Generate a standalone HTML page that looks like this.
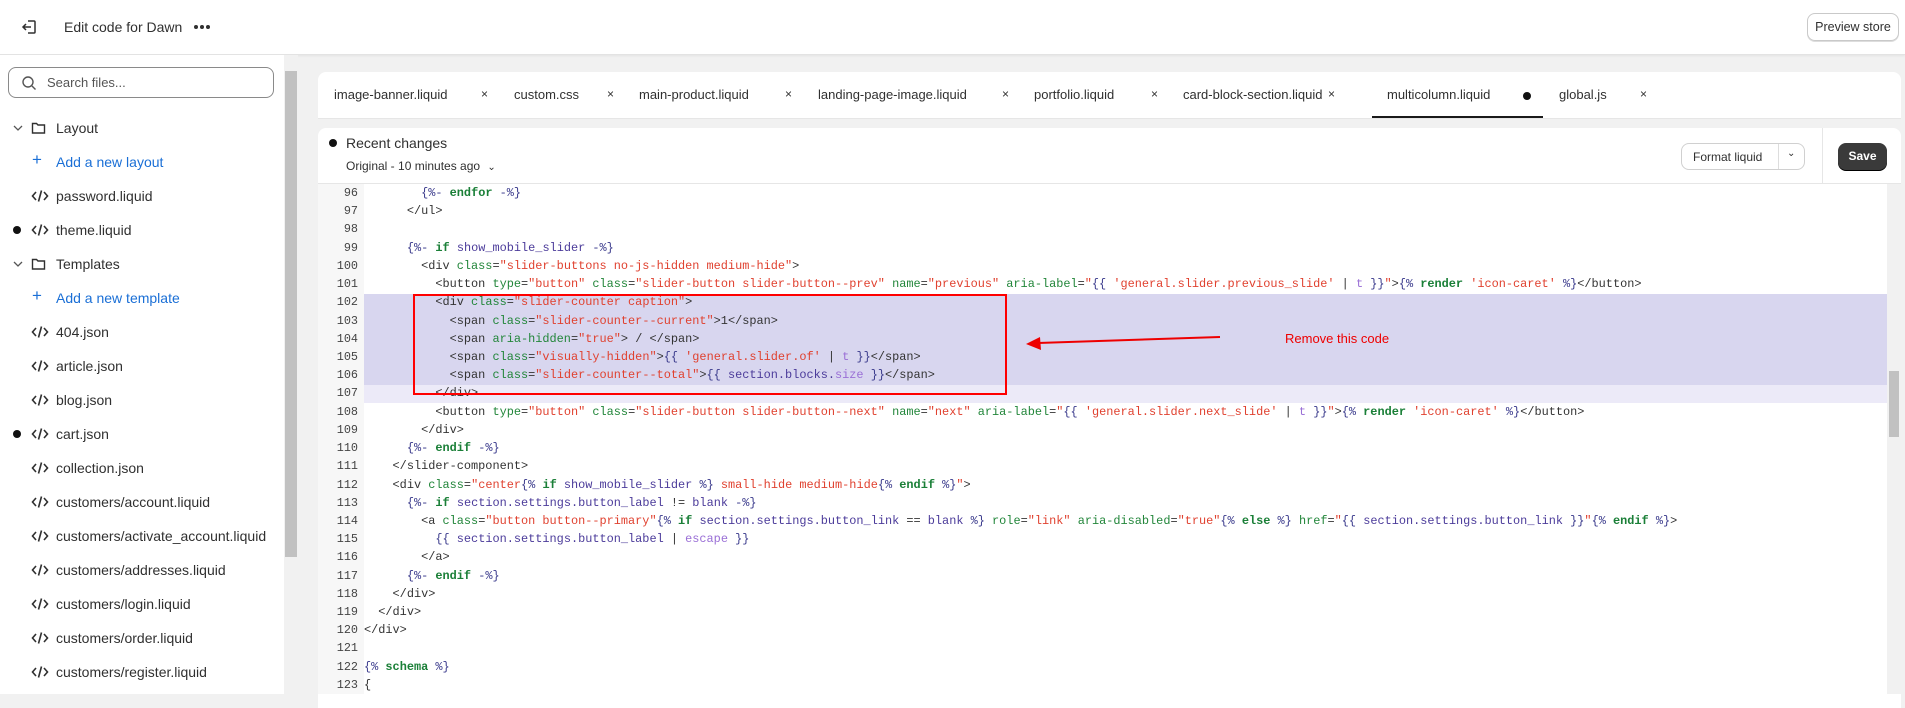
<!DOCTYPE html>
<html><head><meta charset="utf-8"><style>
*{box-sizing:border-box;margin:0;padding:0}
body{width:1905px;height:694px;overflow:hidden;background:#f1f1f1;font-family:"Liberation Sans",sans-serif;color:#303030;position:relative}
.hdr{position:absolute;left:0;top:0;width:1905px;height:55px;background:#fff;border-bottom:1px solid #e3e3e3;box-shadow:0 1px 2px rgba(0,0,0,.06)}
.abs{position:absolute}
.side{position:absolute;left:0;top:55px;width:284px;height:639px;background:#fff}
.sb{position:absolute;left:284px;top:55px;width:14px;height:639px;background:#f1f1f1}
.sb i{position:absolute;left:1px;top:16px;width:12px;height:486px;background:#c1c1c1}
.item{position:absolute;left:56px;font-size:14px;color:#303030;line-height:18px}
.blue{color:#1a6fd6}
.ci{position:absolute;left:31px}
.dot{position:absolute;left:13px;width:8px;height:8px;border-radius:50%;background:#111}
.card{position:absolute;background:#fff;border-radius:8px}
.tab{position:absolute;top:87px;font-size:13px;color:#303030}
.x{position:absolute;top:87px;font-size:12px;color:#303030}
.code{position:absolute;left:364px;top:184px;font-family:"Liberation Mono",monospace;font-size:11.9px;color:#333}
.ln{position:absolute;left:318px;width:40px;text-align:right;font-family:"Liberation Mono",monospace;font-size:11.8px;color:#444}
.l{height:18.23px;line-height:18.23px;white-space:pre}
.t{color:#333}.a{color:#22863a}.s{color:#e0412f}.d{color:#3a3a8c}.k{color:#1a7f37;font-weight:bold}.v{color:#4b3b9a}.f{color:#9a6fd6}
</style></head><body>
<svg width="0" height="0" style="position:absolute"><defs><symbol id="cd" viewBox="0 0 18 14"><path d="M5 3L1.5 7 5 11M13 3l3.5 4L13 11M10.5 1.5L7.5 12.5" fill="none" stroke="#303030" stroke-width="1.6"/></symbol></defs></svg>
<div class="hdr">
<svg class="abs" style="left:20px;top:18px" width="18" height="18" viewBox="0 0 18 18" fill="none" stroke="#303030" stroke-width="1.5"><path d="M8 3h6a1 1 0 0 1 1 1v10a1 1 0 0 1-1 1H8"/><path d="M11 9H3M6 6L3 9l3 3"/></svg>
<div class="abs" style="left:64px;top:19px;font-size:14px">Edit code for Dawn</div>
<div class="abs" style="left:194px;top:25px;width:4px;height:4px;border-radius:50%;background:#303030"></div>
<div class="abs" style="left:200px;top:25px;width:4px;height:4px;border-radius:50%;background:#303030"></div>
<div class="abs" style="left:206px;top:25px;width:4px;height:4px;border-radius:50%;background:#303030"></div>
<div class="abs" style="left:1807px;top:13px;width:92px;height:28px;border:1px solid #c9c9c9;border-radius:8px;font-size:12.5px;text-align:center;line-height:26px;box-shadow:0 1px 0 #ddd">Preview store</div>
</div>
<div class="side">
<div class="abs" style="left:8px;top:12px;width:266px;height:31px;border:1px solid #8a8a8a;border-radius:8px"></div>
<svg class="abs" style="left:21px;top:20px" width="16" height="16" viewBox="0 0 16 16" fill="none" stroke="#555" stroke-width="1.4"><circle cx="7" cy="7" r="5"/><path d="M11 11l3.5 3.5"/></svg>
<div class="abs" style="left:47px;top:20px;font-size:13px;color:#555">Search files...</div>
</div>
<div class="sb"><i></i></div>
<svg class="abs" style="left:12px;top:123px" width="12" height="10" viewBox="0 0 12 10" fill="none" stroke="#555" stroke-width="1.3"><path d="M2 3l4 4 4-4"/></svg>
<svg class="abs" style="left:31px;top:121px" width="15" height="14" viewBox="0 0 15 14" fill="none" stroke="#303030" stroke-width="1.4"><path d="M1.5 2.5h4l1.5 1.5h6.5v8h-12z"/></svg>
<div class="item" style="top:119px">Layout</div>
<div class="abs blue" style="left:32px;top:150px;font-size:17px">+</div>
<div class="item blue" style="top:153px">Add a new layout</div>
<svg class="ci" style="top:189px" width="18" height="14"><use href="#cd"/></svg><div class="item" style="top:187px">password.liquid</div>
<div class="dot" style="top:226px"></div><svg class="ci" style="top:223px" width="18" height="14"><use href="#cd"/></svg><div class="item" style="top:221px">theme.liquid</div>
<svg class="abs" style="left:12px;top:259px" width="12" height="10" viewBox="0 0 12 10" fill="none" stroke="#555" stroke-width="1.3"><path d="M2 3l4 4 4-4"/></svg>
<svg class="abs" style="left:31px;top:257px" width="15" height="14" viewBox="0 0 15 14" fill="none" stroke="#303030" stroke-width="1.4"><path d="M1.5 2.5h4l1.5 1.5h6.5v8h-12z"/></svg>
<div class="item" style="top:255px">Templates</div>
<div class="abs blue" style="left:32px;top:286px;font-size:17px">+</div>
<div class="item blue" style="top:289px">Add a new template</div>
<svg class="ci" style="top:325px" width="18" height="14"><use href="#cd"/></svg><div class="item" style="top:323px">404.json</div>
<svg class="ci" style="top:359px" width="18" height="14"><use href="#cd"/></svg><div class="item" style="top:357px">article.json</div>
<svg class="ci" style="top:393px" width="18" height="14"><use href="#cd"/></svg><div class="item" style="top:391px">blog.json</div>
<div class="dot" style="top:430px"></div><svg class="ci" style="top:427px" width="18" height="14"><use href="#cd"/></svg><div class="item" style="top:425px">cart.json</div>
<svg class="ci" style="top:461px" width="18" height="14"><use href="#cd"/></svg><div class="item" style="top:459px">collection.json</div>
<svg class="ci" style="top:495px" width="18" height="14"><use href="#cd"/></svg><div class="item" style="top:493px">customers/account.liquid</div>
<svg class="ci" style="top:529px" width="18" height="14"><use href="#cd"/></svg><div class="item" style="top:527px">customers/activate_account.liquid</div>
<svg class="ci" style="top:563px" width="18" height="14"><use href="#cd"/></svg><div class="item" style="top:561px">customers/addresses.liquid</div>
<svg class="ci" style="top:597px" width="18" height="14"><use href="#cd"/></svg><div class="item" style="top:595px">customers/login.liquid</div>
<svg class="ci" style="top:631px" width="18" height="14"><use href="#cd"/></svg><div class="item" style="top:629px">customers/order.liquid</div>
<svg class="ci" style="top:665px" width="18" height="14"><use href="#cd"/></svg><div class="item" style="top:663px">customers/register.liquid</div>

<div class="card" style="left:318px;top:72px;width:1583px;height:47px;border-radius:8px 8px 0 0;border-bottom:1px solid #e6e6e6"></div>
<div class="tab" style="left:334px">image-banner.liquid</div><div class="x" style="left:481px">×</div>
<div class="tab" style="left:514px">custom.css</div><div class="x" style="left:607px">×</div>
<div class="tab" style="left:639px">main-product.liquid</div><div class="x" style="left:785px">×</div>
<div class="tab" style="left:818px">landing-page-image.liquid</div><div class="x" style="left:1002px">×</div>
<div class="tab" style="left:1034px">portfolio.liquid</div><div class="x" style="left:1151px">×</div>
<div class="tab" style="left:1183px">card-block-section.liquid</div><div class="x" style="left:1328px">×</div>
<div class="tab" style="left:1387px">multicolumn.liquid</div><div class="abs" style="left:1523px;top:92px;width:8px;height:8px;border-radius:50%;background:#111"></div>
<div class="tab" style="left:1559px">global.js</div><div class="x" style="left:1640px">×</div>
<div class="abs" style="left:1372px;top:116px;width:171px;height:2px;background:#1a1a1a"></div>

<div class="card" style="left:318px;top:128px;width:1583px;height:580px;border-radius:8px 8px 0 0"></div>
<div class="abs" style="left:329px;top:139px;width:8px;height:8px;border-radius:50%;background:#111"></div>
<div class="abs" style="left:346px;top:135px;font-size:14px">Recent changes</div>
<div class="abs" style="left:346px;top:159px;font-size:12px">Original - 10 minutes ago <span style="font-size:10px;margin-left:4px">&#8964;</span></div>
<div class="abs" style="left:318px;top:183px;width:1583px;height:1px;background:#e6e6e6"></div>
<div class="abs" style="left:1822px;top:128px;width:1px;height:55px;background:#e6e6e6"></div>
<div class="abs" style="left:1681px;top:143px;width:124px;height:27px;border:1px solid #d0d0d0;border-radius:8px"></div>
<div class="abs" style="left:1693px;top:150px;font-size:12px">Format liquid</div>
<div class="abs" style="left:1778px;top:144px;width:1px;height:25px;background:#ddd"></div>
<div class="abs" style="left:1787px;top:148px;font-size:10px">&#8964;</div>
<div class="abs" style="left:1838px;top:143px;width:49px;height:27px;border-radius:8px;background:#3a3a3a;color:#fff;font-size:12px;font-weight:bold;text-align:center;line-height:27px;box-shadow:0 1px 0 #000">Save</div>
<div class="abs" style="left:318px;top:184px;width:46px;height:510px;background:#f7f7f7"></div>
<div class="abs" style="left:364px;top:294px;width:1523px;height:91px;background:#d8d6ef"></div>
<div class="abs" style="left:364px;top:385px;width:1523px;height:18px;background:#eceaf8"></div>
<div class="abs" style="left:1887px;top:184px;width:14px;height:510px;background:#f1f1f1"></div>
<div class="abs" style="left:1889px;top:371px;width:10px;height:66px;background:#c1c1c1"></div>

<div class="ln" style="top:184px"><div class="l">96</div><div class="l">97</div><div class="l">98</div><div class="l">99</div><div class="l">100</div><div class="l">101</div><div class="l">102</div><div class="l">103</div><div class="l">104</div><div class="l">105</div><div class="l">106</div><div class="l">107</div><div class="l">108</div><div class="l">109</div><div class="l">110</div><div class="l">111</div><div class="l">112</div><div class="l">113</div><div class="l">114</div><div class="l">115</div><div class="l">116</div><div class="l">117</div><div class="l">118</div><div class="l">119</div><div class="l">120</div><div class="l">121</div><div class="l">122</div><div class="l">123</div></div>

<div class="code">
<div class="l">        <span class="d">{%-</span> <span class="k">endfor</span> <span class="d">-%}</span></div>
<div class="l">      &lt;/ul&gt;</div>
<div class="l"> </div>
<div class="l">      <span class="d">{%-</span> <span class="k">if</span> <span class="v">show_mobile_slider</span> <span class="d">-%}</span></div>
<div class="l">        &lt;div <span class="a">class</span>=<span class="s">"slider-buttons no-js-hidden medium-hide"</span>&gt;</div>
<div class="l">          &lt;button <span class="a">type</span>=<span class="s">"button"</span> <span class="a">class</span>=<span class="s">"slider-button slider-button--prev"</span> <span class="a">name</span>=<span class="s">"previous"</span> <span class="a">aria-label</span>=<span class="s">"</span><span class="d">{{</span> <span class="s">'general.slider.previous_slide'</span> | <span class="f">t</span> <span class="d">}}</span><span class="s">"</span>&gt;<span class="d">{%</span> <span class="k">render</span> <span class="s">'icon-caret'</span> <span class="d">%}</span>&lt;/button&gt;</div>
<div class="l">          &lt;div <span class="a">class</span>=<span class="s">"slider-counter caption"</span>&gt;</div>
<div class="l">            &lt;span <span class="a">class</span>=<span class="s">"slider-counter--current"</span>&gt;1&lt;/span&gt;</div>
<div class="l">            &lt;span <span class="a">aria-hidden</span>=<span class="s">"true"</span>&gt; / &lt;/span&gt;</div>
<div class="l">            &lt;span <span class="a">class</span>=<span class="s">"visually-hidden"</span>&gt;<span class="d">{{</span> <span class="s">'general.slider.of'</span> | <span class="f">t</span> <span class="d">}}</span>&lt;/span&gt;</div>
<div class="l">            &lt;span <span class="a">class</span>=<span class="s">"slider-counter--total"</span>&gt;<span class="d">{{</span> <span class="v">section.blocks.</span><span class="f">size</span> <span class="d">}}</span>&lt;/span&gt;</div>
<div class="l">          &lt;/div&gt;</div>
<div class="l">          &lt;button <span class="a">type</span>=<span class="s">"button"</span> <span class="a">class</span>=<span class="s">"slider-button slider-button--next"</span> <span class="a">name</span>=<span class="s">"next"</span> <span class="a">aria-label</span>=<span class="s">"</span><span class="d">{{</span> <span class="s">'general.slider.next_slide'</span> | <span class="f">t</span> <span class="d">}}</span><span class="s">"</span>&gt;<span class="d">{%</span> <span class="k">render</span> <span class="s">'icon-caret'</span> <span class="d">%}</span>&lt;/button&gt;</div>
<div class="l">        &lt;/div&gt;</div>
<div class="l">      <span class="d">{%-</span> <span class="k">endif</span> <span class="d">-%}</span></div>
<div class="l">    &lt;/slider-component&gt;</div>
<div class="l">    &lt;div <span class="a">class</span>=<span class="s">"center</span><span class="d">{%</span> <span class="k">if</span> <span class="v">show_mobile_slider</span> <span class="d">%}</span><span class="s"> small-hide medium-hide</span><span class="d">{%</span> <span class="k">endif</span> <span class="d">%}</span><span class="s">"</span>&gt;</div>
<div class="l">      <span class="d">{%-</span> <span class="k">if</span> <span class="v">section.settings.button_label</span> != <span class="v">blank</span> <span class="d">-%}</span></div>
<div class="l">        &lt;a <span class="a">class</span>=<span class="s">"button button--primary"</span><span class="d">{%</span> <span class="k">if</span> <span class="v">section.settings.button_link</span> == <span class="v">blank</span> <span class="d">%}</span> <span class="a">role</span>=<span class="s">"link"</span> <span class="a">aria-disabled</span>=<span class="s">"true"</span><span class="d">{%</span> <span class="k">else</span> <span class="d">%}</span> <span class="a">href</span>=<span class="s">"</span><span class="d">{{</span> <span class="v">section.settings.button_link</span> <span class="d">}}</span><span class="s">"</span><span class="d">{%</span> <span class="k">endif</span> <span class="d">%}</span>&gt;</div>
<div class="l">          <span class="d">{{</span> <span class="v">section.settings.button_label</span> | <span class="f">escape</span> <span class="d">}}</span></div>
<div class="l">        &lt;/a&gt;</div>
<div class="l">      <span class="d">{%-</span> <span class="k">endif</span> <span class="d">-%}</span></div>
<div class="l">    &lt;/div&gt;</div>
<div class="l">  &lt;/div&gt;</div>
<div class="l">&lt;/div&gt;</div>
<div class="l"> </div>
<div class="l"><span class="d">{%</span> <span class="k">schema</span> <span class="d">%}</span></div>
<div class="l">{</div>
</div>

<div class="abs" style="left:413px;top:294px;width:594px;height:101px;border:2px solid #f00"></div>
<svg class="abs" style="left:1020px;top:330px" width="210" height="22" viewBox="0 0 210 22"><path d="M200 7L18 13" stroke="#e00" stroke-width="2"/><path d="M6 14L20 7l1 13z" fill="#e00"/></svg>
<div class="abs" style="left:1285px;top:331px;font-size:13px;color:#e00">Remove this code</div>
</body></html>
